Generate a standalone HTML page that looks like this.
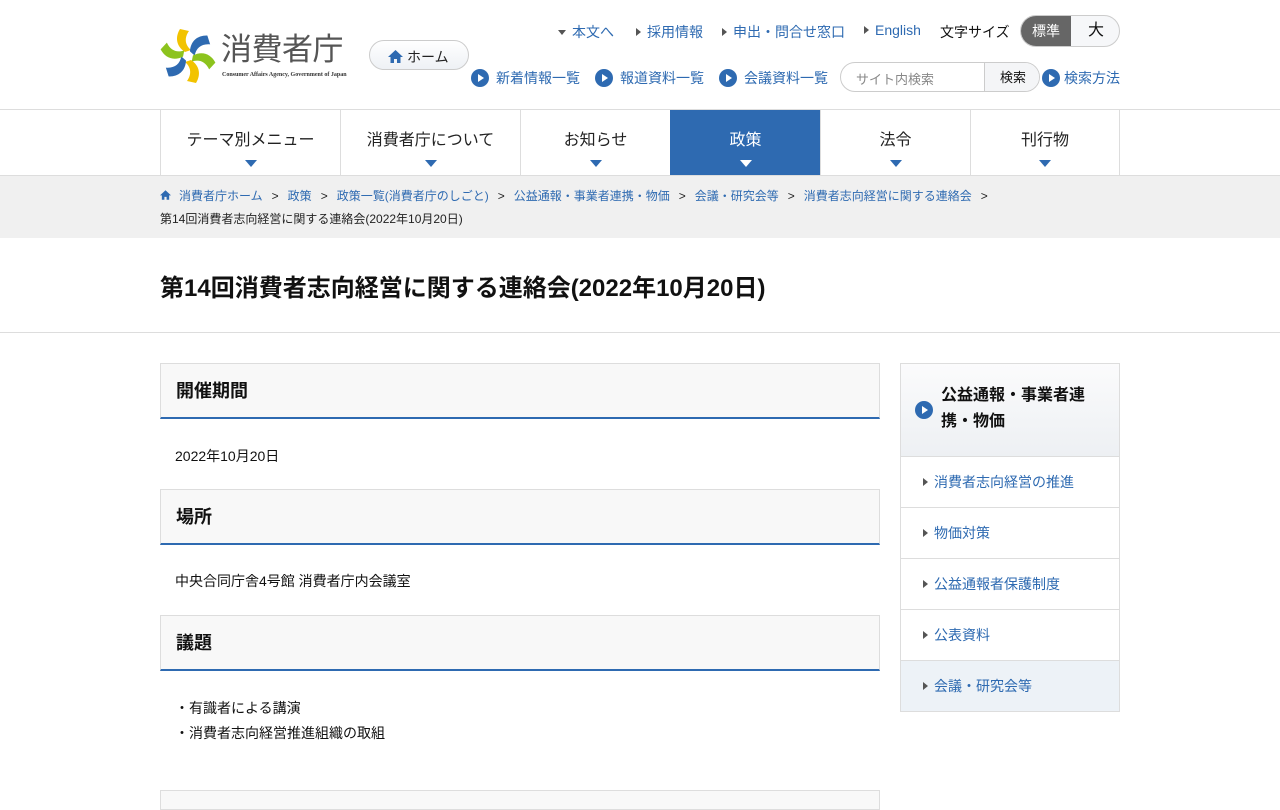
<!DOCTYPE html>
<html><head><meta charset="utf-8">
<style>
*{margin:0;padding:0;box-sizing:border-box}
body{width:1280px;height:800px;overflow:hidden;background:#fff;font-family:"Liberation Sans","Noto Sans CJK JP",sans-serif;color:#222;position:relative}
.a{position:absolute;white-space:nowrap}
.lk{color:#2e6ab1;font-size:14px}
.tri{display:inline-block;width:0;height:0;border-left:5px solid #555;border-top:4px solid transparent;border-bottom:4px solid transparent;margin-right:6px;vertical-align:1px}
.circ{display:inline-block;width:18px;height:18px;border-radius:50%;background:#2e6ab1;position:relative;vertical-align:-4px;margin-right:7px}
.circ:after{content:"";position:absolute;left:7px;top:5px;border-left:6px solid #fff;border-top:4px solid transparent;border-bottom:4px solid transparent}
.nav{position:absolute;top:110px;height:65px;border-left:1px solid #ddd;text-align:center;font-size:16px;color:#222}
.nav span{display:block;margin-top:16px}
.nav i{display:block;margin:10px auto 0;width:0;height:0;border-top:7px solid #2e6ab1;border-left:6px solid transparent;border-right:6px solid transparent}
.h2{position:absolute;left:160px;width:720px;height:56px;background:#f8f8f8;border:1px solid #ddd;border-bottom:2px solid #2e6ab1;font-size:18px;font-weight:bold;padding:13px 15px;color:#111}
.txt{position:absolute;left:175px;font-size:14px;color:#111}
.si{position:absolute;left:900px;width:220px;height:52px;border:1px solid #ddd;font-size:14px;color:#2e6ab1;padding:15px 0 0 22px}
.bc span{color:#2e6ab1}
.bc b{font-weight:normal;margin:0 9px}
</style></head><body>
<svg class="a" style="left:158px;top:28px" width="60" height="56" viewBox="-30 -28 60 56">
<g><path d="M-3,-4 C-12,-10 -13,-19 -8,-27 L1,-25 C-4,-18 -3,-11 3,-6 Z" fill="#f2c300"/></g>
<g transform="rotate(60)"><path d="M-3,-4 C-12,-10 -13,-19 -8,-27 L1,-25 C-4,-18 -3,-11 3,-6 Z" fill="#2e6ab1"/></g>
<g transform="rotate(120)"><path d="M-3,-4 C-12,-10 -13,-19 -8,-27 L1,-25 C-4,-18 -3,-11 3,-6 Z" fill="#8cc31e"/></g>
<g transform="rotate(180)"><path d="M-3,-4 C-12,-10 -13,-19 -8,-27 L1,-25 C-4,-18 -3,-11 3,-6 Z" fill="#f2c300"/></g>
<g transform="rotate(240)"><path d="M-3,-4 C-12,-10 -13,-19 -8,-27 L1,-25 C-4,-18 -3,-11 3,-6 Z" fill="#2e6ab1"/></g>
<g transform="rotate(300)"><path d="M-3,-4 C-12,-10 -13,-19 -8,-27 L1,-25 C-4,-18 -3,-11 3,-6 Z" fill="#8cc31e"/></g>
</svg>
<div class="a" style="left:221px;top:32px;font-size:31px;color:#555;letter-spacing:-0.5px;line-height:36px">消費者庁</div>
<div class="a" style="left:222px;top:72px;font-size:6px;font-weight:bold;color:#333;font-family:'Liberation Serif',serif">Consumer Affairs Agency, Government of Japan</div>
<div class="a" style="left:369px;top:40px;width:100px;height:30px;border:1px solid #ccc;border-radius:15px;background:linear-gradient(#fff,#eef1f5);font-size:14px;padding:6px 0 0 18px;color:#222">
<svg width="15" height="13" viewBox="0 0 15 13" style="vertical-align:-1px;margin-right:4px"><path d="M7.5,0 L15,7 H12.5 V13 H9 V9 H6 V13 H2.5 V7 H0 Z" fill="#2e6ab1"/></svg>ホーム</div>
<div class="a lk" style="left:558px;top:22px"><span class="tri" style="border-left:4px solid transparent;border-right:4px solid transparent;border-top:5px solid #555;border-bottom:0;vertical-align:2px"></span>本文へ</div>
<div class="a lk" style="left:636px;top:22px"><span class="tri"></span>採用情報</div>
<div class="a lk" style="left:722px;top:22px"><span class="tri"></span>申出・問合せ窓口</div>
<div class="a lk" style="left:864px;top:22px"><span class="tri"></span>English</div>
<div class="a" style="left:940px;top:22px;font-size:14px;color:#111">文字サイズ</div>
<div class="a" style="left:1020px;top:15px;width:100px;height:32px;border:1px solid #ccc;border-radius:16px;overflow:hidden;background:#f6f7f9">
<div style="position:absolute;left:0;top:0;width:50px;height:32px;background:#666;color:#fff;font-size:14px;text-align:center;line-height:30px">標準</div>
<div style="position:absolute;left:50px;top:0;width:50px;height:32px;font-size:16px;text-align:center;line-height:30px;color:#111">大</div></div>
<div class="a lk" style="left:471px;top:68px"><span class="circ"></span>新着情報一覧</div>
<div class="a lk" style="left:595px;top:68px"><span class="circ"></span>報道資料一覧</div>
<div class="a lk" style="left:719px;top:68px"><span class="circ"></span>会議資料一覧</div>
<div class="a" style="left:840px;top:62px;width:200px;height:30px;border:1px solid #ccc;border-radius:15px;overflow:hidden">
<div style="position:absolute;left:15px;top:6px;font-size:13px;color:#888">サイト内検索</div>
<div style="position:absolute;left:143px;top:0;width:57px;height:30px;border-left:1px solid #ccc;background:#f4f5f7;font-size:13px;text-align:center;line-height:30px;color:#111">検索</div></div>
<div class="a lk" style="left:1042px;top:68px"><span class="circ" style="margin-right:4px"></span>検索方法</div>
<div class="a" style="left:0;top:109px;width:1280px;height:1px;background:#ddd"></div>
<div class="nav" style="left:160px;width:180px"><span>テーマ別メニュー</span><i></i></div>
<div class="nav" style="left:340px;width:180px"><span>消費者庁について</span><i></i></div>
<div class="nav" style="left:520px;width:150px"><span>お知らせ</span><i></i></div>
<div class="nav" style="left:670px;width:150px;background:#2e6ab1;color:#fff;border-color:#2e6ab1"><span>政策</span><i style="border-top-color:#fff"></i></div>
<div class="nav" style="left:820px;width:150px"><span>法令</span><i></i></div>
<div class="nav" style="left:970px;width:150px;border-right:1px solid #ddd"><span>刊行物</span><i></i></div>
<div class="a" style="left:0;top:175px;width:1280px;height:63px;background:#f0f0f0;border-top:1px solid #ddd"></div>
<div class="a bc" style="left:160px;top:187px;font-size:12px;color:#222">
<svg width="11" height="10" viewBox="0 0 15 13" style="vertical-align:0;margin-right:8px"><path d="M7.5,0 L15,7 H12.5 V13 H9 V9 H6 V13 H2.5 V7 H0 Z" fill="#2e6ab1"/></svg><span>消費者庁ホーム</span><b>&gt;</b><span>政策</span><b>&gt;</b><span>政策一覧(消費者庁のしごと)</span><b>&gt;</b><span>公益通報・事業者連携・物価</span><b>&gt;</b><span>会議・研究会等</span><b>&gt;</b><span>消費者志向経営に関する連絡会</span><b>&gt;</b></div>
<div class="a" style="left:160px;top:210px;font-size:12px;color:#222">第14回消費者志向経営に関する連絡会(2022年10月20日)</div>
<div class="a" style="left:160px;top:268px;font-size:24px;font-weight:bold;color:#111">第14回消費者志向経営に関する連絡会(2022年10月20日)</div>
<div class="a" style="left:0;top:332px;width:1280px;height:1px;background:#ddd"></div>
<div class="h2" style="top:363px">開催期間</div>
<div class="txt" style="top:446px">2022年10月20日</div>
<div class="h2" style="top:489px">場所</div>
<div class="txt" style="top:571px">中央合同庁舎4号館 消費者庁内会議室</div>
<div class="h2" style="top:615px">議題</div>
<div class="txt" style="top:698px">・有識者による講演</div>
<div class="txt" style="top:723px">・消費者志向経営推進組織の取組</div>
<div class="a" style="left:160px;top:790px;width:720px;height:20px;background:#f8f8f8;border:1px solid #ddd"></div>
<div class="a" style="left:900px;top:363px;width:220px;height:94px;border:1px solid #ddd;background:linear-gradient(#fbfbfc,#edf0f3)">
<span class="circ" style="position:absolute;left:14px;top:37px"></span>
<div style="position:absolute;left:40px;top:19px;font-size:16px;font-weight:bold;line-height:26px;white-space:normal;width:160px;color:#111">公益通報・事業者連携・物価</div></div>
<div class="si" style="top:456px"><span class="tri"></span>消費者志向経営の推進</div>
<div class="si" style="top:507px"><span class="tri"></span>物価対策</div>
<div class="si" style="top:558px"><span class="tri"></span>公益通報者保護制度</div>
<div class="si" style="top:609px"><span class="tri"></span>公表資料</div>
<div class="si" style="top:660px;background:#edf2f7"><span class="tri"></span>会議・研究会等</div>
</body></html>
